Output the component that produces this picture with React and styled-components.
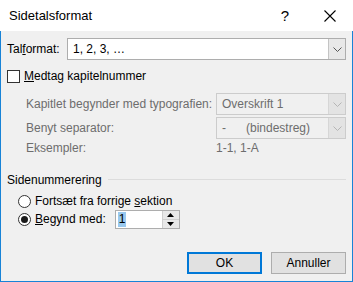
import styled, { createGlobalStyle } from "styled-components";

const Global = createGlobalStyle`
  html, body { margin: 0; padding: 0; background: #fff; }
  body { font-family: "Liberation Sans", Arial, sans-serif; font-size: 12px; }
`;

const Window = styled.div`
  width: 353px;
  height: 282px;
  display: flex;
  flex-direction: column;
  box-sizing: border-box;
`;

const TitleBar = styled.div`
  height: 31px;
  flex: none;
  background: #fff;
  display: flex;
  align-items: center;
  padding-left: 9px;
  color: #000;
  font-size: 13px;
`;

const Title = styled.div`
  flex: 1;
  padding-bottom: 1px;
`;

const TitleButton = styled.div`
  width: ${(p) => p.$w}px;
  display: flex;
  justify-content: center;
  align-items: center;
  font-size: 15px;
`;

const Body = styled.div`
  flex: 1;
  background: #f0f0f0;
  border: 1px solid #1883d7;
  border-top: none;
  padding: 7px 6px 7px 6px;
  display: flex;
  flex-direction: column;
  color: #000;
`;

const Row = styled.div`
  display: flex;
  align-items: center;
  height: ${(p) => p.$h || 22}px;
  margin-top: ${(p) => p.$mt || 0}px;
  padding-left: ${(p) => p.$indent || 0}px;
  color: ${(p) => (p.$disabled ? "#6d6d6d" : "#000")};
`;

const Label = styled.div`
  width: ${(p) => p.$w}px;
  flex: none;
`;

const Combo = styled.div`
  flex: 1;
  height: 22px;
  box-sizing: border-box;
  display: flex;
  align-items: stretch;
  border: 1px solid ${(p) => (p.$disabled ? "#cccccc" : "#adadad")};
  background: ${(p) => (p.$disabled ? "#f0f0f0" : "#fff")};
  color: ${(p) => (p.$disabled ? "#6d6d6d" : "#000")};
`;

const ComboText = styled.div`
  flex: 1;
  display: flex;
  align-items: center;
  padding-left: 5px;
  white-space: pre;
`;

const ComboButton = styled.div`
  width: 16px;
  display: flex;
  align-items: center;
  justify-content: center;
  background: ${(p) => (p.$disabled ? "#e3e3e3" : "#e8e8e8")};
  border-left: 1px solid ${(p) => (p.$disabled ? "#d6d6d6" : "#c4c4c4")};
`;

const Check = styled.div`
  width: 13px;
  height: 13px;
  box-sizing: border-box;
  border: 1px solid #333;
  background: #fff;
  margin-right: 4px;
  flex: none;
`;

const Radio = styled.div`
  width: 13px;
  height: 13px;
  box-sizing: border-box;
  border: 1px solid #333;
  border-radius: 50%;
  background: #fff;
  margin-right: 4px;
  flex: none;
  display: flex;
  align-items: center;
  justify-content: center;
  &::after {
    content: "";
    display: ${(p) => (p.$checked ? "block" : "none")};
    width: 7px;
    height: 7px;
    border-radius: 50%;
    background: #1a1a1a;
  }
`;

const GroupHeader = styled.div`
  display: flex;
  align-items: center;
  height: 16px;
  margin-top: 15px;
  &::after {
    content: "";
    flex: 1;
    height: 1px;
    background: #dcdcdc;
    margin-left: 6px;
    margin-top: -2px;
  }
`;

const Spinner = styled.div`
  width: 65px;
  height: 19px;
  box-sizing: border-box;
  border: 1px solid #adadad;
  background: #fff;
  display: flex;
  margin-left: 9px;
`;

const SpinValue = styled.div`
  flex: 1;
  display: flex;
  align-items: center;
  padding-left: 2px;
  span {
    background: #99c9ef;
    padding: 0 1px;
    line-height: 15px;
  }
`;

const SpinButtons = styled.div`
  width: 16px;
  display: flex;
  flex-direction: column;
  border-left: 1px solid #cfcfcf;
`;

const SpinButton = styled.div`
  flex: 1;
  background: #e8e8e8;
  display: flex;
  align-items: center;
  justify-content: center;
  & + & {
    border-top: 1px solid #cfcfcf;
  }
`;

const Footer = styled.div`
  margin-top: auto;
  display: flex;
  justify-content: flex-end;
  gap: 9px;
`;

const Button = styled.div`
  width: 75px;
  height: 22px;
  box-sizing: border-box;
  background: #e1e1e1;
  border: ${(p) => (p.$default ? "2px solid #0078d7" : "1px solid #adadad")};
  display: flex;
  align-items: center;
  justify-content: center;
`;

const Chevron = ({ color }) => (
  <svg width="9" height="5" viewBox="0 0 9 5">
    <path d="M0.5 0.5 L4.5 4.5 L8.5 0.5" fill="none" stroke={color} strokeWidth="1" />
  </svg>
);

const Tri = ({ up }) => (
  <svg width="7" height="4" viewBox="0 0 7 4">
    <path d={up ? "M0 4 L3.5 0 L7 4 Z" : "M0 0 L3.5 4 L7 0 Z"} fill="#000" />
  </svg>
);

export default function App() {
  return (
    <Window>
      <Global />
      <TitleBar>
        <Title>Sidetalsformat</Title>
        <TitleButton $w={44}>?</TitleButton>
        <TitleButton $w={46}>
          <svg width="12" height="12" viewBox="0 0 12 12">
            <path d="M0.5 0.5 L11.5 11.5 M11.5 0.5 L0.5 11.5" stroke="#000" strokeWidth="1.1" />
          </svg>
        </TitleButton>
      </TitleBar>
      <Body>
        <Row>
          <Label $w={60}>
            Tal<u>f</u>ormat:
          </Label>
          <Combo>
            <ComboText>1, 2, 3, …</ComboText>
            <ComboButton>
              <Chevron color="#555" />
            </ComboButton>
          </Combo>
        </Row>
        <Row $h={14} $mt={9}>
          <Check />
          <span>
            <u>M</u>edtag kapitelnummer
          </span>
        </Row>
        <Row $mt={10} $indent={19} $disabled>
          <Label $w={190}>Kapitlet begynder med typografien:</Label>
          <Combo $disabled>
            <ComboText>Overskrift 1</ComboText>
            <ComboButton $disabled>
              <Chevron color="#b5b5b5" />
            </ComboButton>
          </Combo>
        </Row>
        <Row $mt={2} $indent={19} $disabled>
          <Label $w={190}>Benyt separator:</Label>
          <Combo $disabled>
            <ComboText>{"-      (bindestreg)"}</ComboText>
            <ComboButton $disabled>
              <Chevron color="#b5b5b5" />
            </ComboButton>
          </Combo>
        </Row>
        <Row $h={18} $indent={19} $disabled>
          <Label $w={190}>Eksempler:</Label>
          <span>1-1, 1-A</span>
        </Row>
        <GroupHeader>Sidenummerering</GroupHeader>
        <Row $h={16} $mt={5} $indent={11}>
          <Radio />
          <span>
            Fortsæt fra forrige <u>s</u>ektion
          </span>
        </Row>
        <Row $h={20} $mt={0} $indent={11}>
          <Radio $checked />
          <span>
            <u>B</u>egynd med:
          </span>
          <Spinner>
            <SpinValue>
              <span>1</span>
            </SpinValue>
            <SpinButtons>
              <SpinButton>
                <Tri up />
              </SpinButton>
              <SpinButton>
                <Tri />
              </SpinButton>
            </SpinButtons>
          </Spinner>
        </Row>
        <Footer>
          <Button $default>OK</Button>
          <Button>Annuller</Button>
        </Footer>
      </Body>
    </Window>
  );
}
